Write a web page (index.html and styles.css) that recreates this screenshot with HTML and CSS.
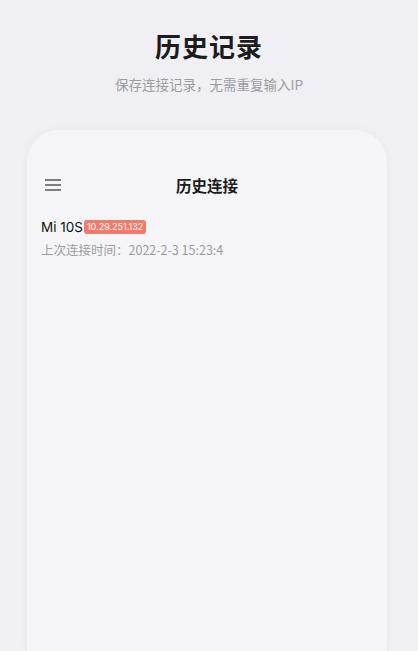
FILE: index.html
```html
<!DOCTYPE html>
<html lang="zh-CN">
<head>
    <meta charset="UTF-8">
    <meta name="viewport" content="width=device-width, initial-scale=1.0">
    <title>历史记录</title>
    <link rel="stylesheet" href="styles.css">
</head>
<body>
    <header class="page-head">
        <h1>历史记录</h1>
        <p>保存连接记录，无需重复输入IP</p>
    </header>

    <div class="phone">
        <div class="toolbar">
            <svg class="menu-icon" width="18" height="14" viewBox="0 0 18 14">
                <path d="M1 2h16M1 7h16M1 12h16" stroke="#555" stroke-width="1.6" fill="none"/>
            </svg>
            <div class="toolbar-title">历史连接</div>
        </div>

        <div class="history-item">
            <div class="device">
                <span class="device-name">Mi 10S</span>
                <span class="ip-tag">10.29.251.132</span>
            </div>
            <div class="last-time">上次连接时间：2022-2-3 15:23:4</div>
        </div>
    </div>
</body>
</html>
```

FILE: styles.css
```css
html, body {
    margin: 0;
    height: 100%;
    overflow: hidden;
}
body {
    font-family: "Noto Sans CJK SC", "Noto Sans", sans-serif;
    background: #f0eff4;
    color: #222;
    display: flex;
    flex-direction: column;
}
.page-head {
    text-align: center;
    padding-top: 27px;
}
.page-head h1 {
    margin: 0;
    font-size: 26px;
    line-height: 38px;
    font-weight: 700;
    color: #1c1c1e;
    letter-spacing: 1px;
}
.page-head p {
    margin: 9px 0 0;
    font-size: 13.5px;
    line-height: 20px;
    color: #9c9ca0;
}
.phone {
    flex: 1;
    margin: 36px 0 0 27px;
    padding-top: 35px;
    width: 360px;
    background: #f5f5f7;
    border-radius: 32px 32px 0 0;
    box-shadow: 0 0 0 1px #ececf0, 0 0 10px rgba(0,0,0,0.04);
}
.toolbar {
    position: relative;
    height: 40px;
    display: flex;
    align-items: center;
    justify-content: center;
}
.menu-icon {
    position: absolute;
    left: 17px;
    top: 13px;
}
.toolbar-title {
    font-size: 15.5px;
    font-weight: 700;
    color: #1c1c1e;
}
.history-item {
    padding: 11px 14px 0;
}
.device {
    display: flex;
    align-items: center;
    height: 22px;
}
.device-name {
    font-family: Inter, "Noto Sans", sans-serif;
    font-size: 13.5px;
    color: #111;
}
.ip-tag {
    margin-left: 1px;
    background: #f17b6b;
    color: #fff;
    font-family: Inter, "Noto Sans", sans-serif;
    font-size: 9px;
    line-height: 14px;
    padding: 0 3px;
    border-radius: 3px;
}
.last-time {
    margin-top: 3px;
    font-size: 12.5px;
    line-height: 18px;
    color: #9c9ca0;
}
```
